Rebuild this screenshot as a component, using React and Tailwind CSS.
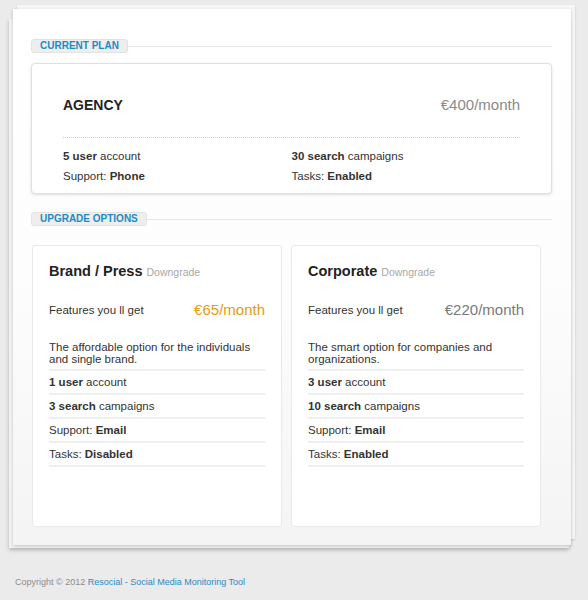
import React from "react";

const plans = [
  {
    name: "Brand / Press",
    price: "€65",
    priceClass: "text-[#e59c0c]",
    text: "The affordable option for the individuals and single brand.",
    users: "1",
    searches: "3",
    support: "Email",
    tasks: "Disabled",
  },
  {
    name: "Corporate",
    price: "€220",
    priceClass: "text-[#7a7a7a]",
    text: "The smart option for companies and organizations.",
    users: "3",
    searches: "10",
    support: "Email",
    tasks: "Enabled",
  },
];

const SectionLabel = ({ children }) => (
  <div className="flex items-center">
    <span className="h-[14px] px-[8px] flex items-center rounded-[3px] bg-[#eeeeee] border border-[#e2e2e2] text-[10px] leading-none font-bold uppercase text-[#1d8bc6]">
      {children}
    </span>
    <div className="flex-1 h-px bg-[#e6e6e6]"></div>
  </div>
);

const Row = ({ children }) => (
  <div className="h-[24px] leading-[22px] border-b-2 border-[#efefef]">{children}</div>
);

const PlanCard = ({ plan }) => (
  <div className="bg-white rounded-[3px] border border-[#e9e9e9] h-[282px] pt-[15px] px-[16px]">
    <div className="flex items-baseline gap-[4px] leading-[20px]">
      <span className="text-[14.5px] font-bold text-[#222]">{plan.name}</span>
      <span className="text-[10.5px] text-[#a8a8a8]">Downgrade</span>
    </div>
    <div className="mt-[18px] flex items-center justify-between leading-[20px]">
      <span>Features you ll get</span>
      <span className={"text-[15px] " + plan.priceClass}>{plan.price}/month</span>
    </div>
    <div className="mt-[21px] leading-[12px] pb-[4px] border-b-2 border-[#efefef]">
      {plan.text}
    </div>
    <Row>
      <b>{plan.users} user</b> account
    </Row>
    <Row>
      <b>{plan.searches} search</b> campaigns
    </Row>
    <Row>
      Support: <b>{plan.support}</b>
    </Row>
    <Row>
      Tasks: <b>{plan.tasks}</b>
    </Row>
  </div>
);

export default function App() {
  return (
    <div
      className="min-h-[600px] bg-[#ebebeb] pt-[9px] text-[11.5px] text-[#333]"
      style={{ fontFamily: '"Liberation Sans", Arial, sans-serif' }}
    >
      <div className="relative ml-[13px] w-[558px]">
        {/* stacked sheets behind */}
        <div className="absolute -top-[4px] left-[4px] -right-[4px] bottom-[6px] bg-[#f6f6f6] shadow-[0_1px_2px_rgba(0,0,0,0.15)]"></div>
        <div className="absolute top-[10px] -left-[4px] right-[2px] -bottom-[3px] bg-[#f2f2f2] shadow-[0_2px_4px_rgba(0,0,0,0.25)]"></div>

        <div className="relative bg-gradient-to-b from-white via-[#fdfdfd] to-[#f4f4f4] shadow-[0_1px_3px_rgba(0,0,0,0.2)] h-[536px] pt-[30px] pl-[18px] pr-[19px]">
          <SectionLabel>Current Plan</SectionLabel>

          <div className="mt-[10px] bg-white rounded-[4px] border border-[#e0e0e0] shadow-[0_1px_3px_rgba(0,0,0,0.12)] h-[131px] px-[31px] pt-[31px]">
            <div className="flex items-center justify-between leading-[20px]">
              <span className="text-[14px] font-bold text-[#222]">AGENCY</span>
              <span className="text-[15px] text-[#8a8a8a]">€400/month</span>
            </div>
            <div className="mt-[22px] border-t border-dotted border-[#cfcfcf]"></div>
            <div className="grid grid-cols-2 pt-[8px] leading-[20px]">
              <div>
                <b>5 user</b> account
              </div>
              <div>
                <b>30 search</b> campaigns
              </div>
              <div>
                Support: <b>Phone</b>
              </div>
              <div>
                Tasks: <b>Enabled</b>
              </div>
            </div>
          </div>

          <div className="mt-[18px]">
            <SectionLabel>Upgrade Options</SectionLabel>
          </div>

          <div className="mt-[19px] ml-px mr-[11px] grid grid-cols-2 gap-[9px]">
            {plans.map((p) => (
              <PlanCard key={p.name} plan={p} />
            ))}
          </div>
        </div>
      </div>

      <div className="mt-[31px] ml-[15px] text-[9px] text-[#8c8c8c]">
        Copyright © 2012{" "}
        <a href="#" className="text-[#2a8ac4]">
          Resocial - Social Media Monitoring Tool
        </a>
      </div>
    </div>
  );
}
